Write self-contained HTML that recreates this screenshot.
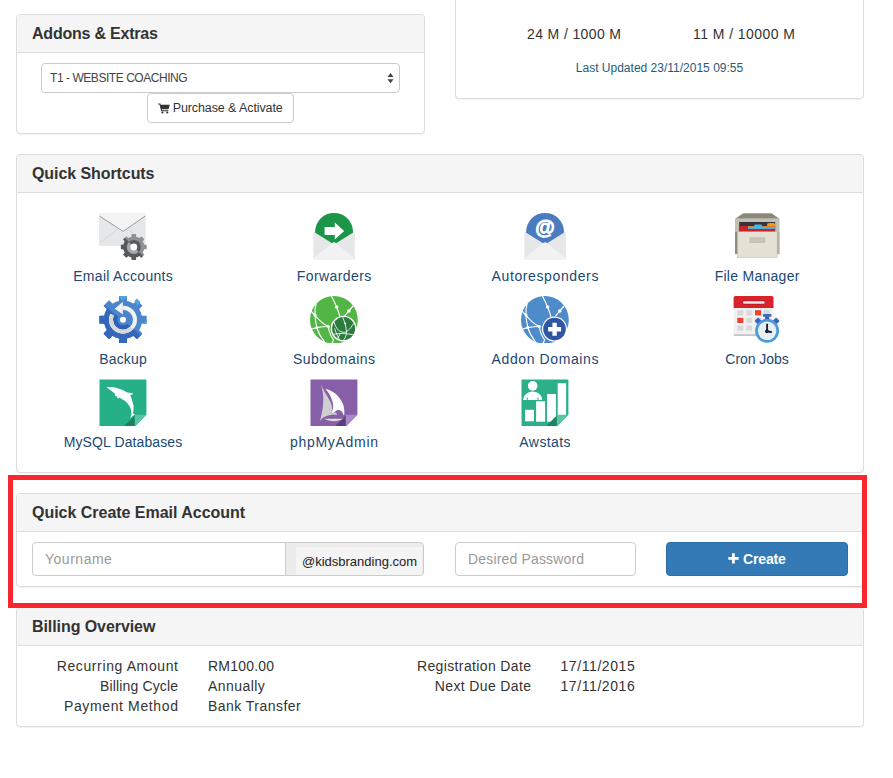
<!DOCTYPE html>
<html><head><meta charset="utf-8">
<style>
*{box-sizing:border-box;margin:0;padding:0}
html,body{width:893px;height:778px;background:#fff;overflow:hidden}
body{font-family:"Liberation Sans",sans-serif;color:#333;position:relative;font-size:14px}
.panel{position:absolute;border:1px solid #ddd;border-radius:4px;background:#fff;box-shadow:0 1px 1px rgba(0,0,0,.05)}
.ph{height:38px;background:#f5f5f5;border-bottom:1px solid #ddd;border-radius:3px 3px 0 0;padding-left:15px;line-height:37px;font-size:16px;font-weight:bold;color:#333;white-space:nowrap}
.abs{position:absolute}
.sel{position:absolute;left:24px;top:48px;width:359px;height:30px;border:1px solid #ccc;border-radius:4px;font-size:12px;line-height:29px;padding-left:8px;color:#444}
.btn{position:absolute;border:1px solid #ccc;border-radius:4px;background:#fff;font-size:12.5px;color:#333;text-align:center}
.sc{position:absolute;width:212px;text-align:center;color:#1f4e79;font-size:14.5px}
.sc svg{display:block;margin:0 auto}
.lbl{position:absolute;left:0;right:0;text-align:center}
.lb{width:200px;text-align:center;color:#1b4872;font-size:14px;line-height:20px;white-space:nowrap}
.red{position:absolute;left:8px;top:475px;width:859px;height:133px;border:5px solid #f8262f}
.inp{position:absolute;height:34px;border:1px solid #ccc;border-radius:4px;font-size:14px;color:#999;line-height:32px;padding-left:12px;background:#fff}
.bill{position:absolute;font-size:14px;color:#333;line-height:20px;white-space:nowrap}
</style></head><body>

<div class="panel" style="left:16px;top:14px;width:409px;height:120px">
  <div class="ph"><span style="letter-spacing:-0.221px;margin-right:0.221px">Addons &amp; Extras</span></div>
  <div class="sel"><span style="letter-spacing:-0.452px;margin-right:0.452px">T1 - WEBSITE COACHING</span>
    <svg class="abs" style="right:5px;top:9px" width="7" height="11" viewBox="0 0 7 11"><path d="M3.5 0L6.5 4H.5zM3.5 10.3L.5 6.3h6z" fill="#444"/></svg>
  </div>
  <div class="btn" style="left:130px;top:78px;width:147px;height:30px;line-height:28px">
    <svg style="vertical-align:-1.5px;margin-right:-1px" width="12" height="10.6" viewBox="0 0 11 10"><path d="M0 .5h2l.4 1.2H11L9.8 5.8H3.3l.3 1h6v1H2.8L1.3 1.5H0z" fill="#333"/><circle cx="4" cy="9" r="1" fill="#333"/><circle cx="8.6" cy="9" r="1" fill="#333"/></svg> <span style="letter-spacing:-0.099px;margin-right:0.099px">Purchase &amp; Activate</span></div>
</div>

<div class="panel" style="left:455px;top:-20px;width:409px;height:119px">
  <div class="abs" style="left:0;width:236px;top:45px;text-align:center;font-size:14px"><span style="letter-spacing:0.377px;margin-right:-0.377px">24 M / 1000 M</span></div>
  <div class="abs" style="left:170px;width:236px;top:45px;text-align:center;font-size:14px"><span style="letter-spacing:0.446px;margin-right:-0.446px">11 M / 10000 M</span></div>
  <div class="abs" style="left:0;right:0;top:80px;text-align:center;font-size:12px;color:#1f5a7a"><span style="letter-spacing:0.005px;margin-right:-0.005px">Last Updated 23/11/2015 09:55</span></div>
</div>

<div class="panel" style="left:16px;top:154px;width:848px;height:319px">
  <div class="ph"><span style="letter-spacing:-0.079px;margin-right:0.079px">Quick Shortcuts</span></div>
<svg class="abs" style="left:82px;top:57px" width="48" height="48" viewBox="0 0 48 48">
<rect x="0" y="1" width="46.6" height="33" rx="1.5" fill="#e6e7e8"/>
<path d="M0.3 2.5 Q0.5 1 1.8 1H44.8Q46.2 1 46.4 2.5V4L24.1 19.4L0.3 4z" fill="#f3f3f3"/>
<path d="M0.4 4L24.1 19.4L46.3 4" fill="none" stroke="#8c8c8c" stroke-width="0.85"/>
<path d="M0.7 30.5L19.4 17" fill="none" stroke="#d0d0d0" stroke-width="0.6"/>
<path d="M29 17.4L36 22.5" fill="none" stroke="#d0d0d0" stroke-width="0.6"/>
<g transform="translate(34.8 35)">
<defs><clipPath id="gl"><path d="M-20 -20L20 20H-20z"/></clipPath>
<g id="eg"><circle r="10.6"/>
<g id="t"><rect x="-2.3" y="-12.9" width="4.6" height="5" rx="0.7"/></g>
<use href="#t" transform="rotate(45)"/><use href="#t" transform="rotate(90)"/><use href="#t" transform="rotate(135)"/><use href="#t" transform="rotate(180)"/><use href="#t" transform="rotate(225)"/><use href="#t" transform="rotate(270)"/><use href="#t" transform="rotate(315)"/>
</g></defs>
<use href="#eg" fill="#8e9093"/>
<use href="#eg" fill="#58595b" clip-path="url(#gl)"/>
<circle r="7" fill="#58595b"/>
<circle r="7" fill="#a7a9ac" clip-path="url(#gl)"/>
<circle r="3.4" fill="#fff"/>
</g></svg>
<div class="abs lb" style="left:6px;top:111px"><span style="letter-spacing:0.292px;margin-right:-0.292px">Email Accounts</span></div>
<svg class="abs" style="left:293px;top:57px" width="48" height="48" viewBox="0 0 48 48">
<circle cx="24.05" cy="19.9" r="19" fill="#1b9548"/>
<path d="M3.3 18.4V47.7H24.05V32.6L3.3 19.4z" fill="#e6e7e8"/>
<path d="M44.8 18.4V47.7H24.05V32.6L44.8 19.4z" fill="#e6e7e8"/>
<path d="M3.3 47.7V46.4L22.2 31Q24.05 29.3 25.9 31L44.8 46.4V47.7z" fill="#f2f2f2"/>
<path d="M14.6 14.9H24.8V10.4L34.2 19L24.8 27.5V22.9H14.6z" fill="#fff"/></svg>
<div class="abs lb" style="left:217px;top:111px"><span style="letter-spacing:0.420px;margin-right:-0.420px">Forwarders</span></div>
<svg class="abs" style="left:504px;top:57px" width="48" height="48" viewBox="0 0 48 48">
<circle cx="24.05" cy="19.9" r="19" fill="#4a7bbf"/>
<path d="M3.3 18.4V47.7H24.05V32.6L3.3 19.4z" fill="#e6e7e8"/>
<path d="M44.8 18.4V47.7H24.05V32.6L44.8 19.4z" fill="#e6e7e8"/>
<path d="M3.3 47.7V46.4L22.2 31Q24.05 29.3 25.9 31L44.8 46.4V47.7z" fill="#f2f2f2"/>
<text x="24" y="21.6" text-anchor="middle" font-family="Liberation Sans" font-weight="bold" font-size="20" fill="#fff" stroke="#fff" stroke-width="0.9">@</text></svg>
<div class="abs lb" style="left:428px;top:111px"><span style="letter-spacing:0.611px;margin-right:-0.611px">Autoresponders</span></div>
<svg class="abs" style="left:716px;top:57px" width="48" height="48" viewBox="0 0 48 48">
<path d="M10.4 1.3H38.4L46.5 6.7H2z" fill="#8a877b"/>
<rect x="2" y="6.7" width="44.5" height="35.4" fill="#c3c0b2"/>
<rect x="2" y="19.7" width="3" height="22.4" fill="#8f8c80"/>
<rect x="43.8" y="19.7" width="2.7" height="22.4" fill="#b5b2a4"/>
<rect x="6.2" y="10" width="35.9" height="9.6" fill="#34343c"/>
<rect x="6.4" y="14" width="35.7" height="5.6" fill="#c9222a"/>
<path d="M15 14H21.1V14.7H15z M29.1 14H34.1V14.7H29.1z" fill="#f7941e"/>
<path d="M34.1 14.8V12.6Q34.1 11 35.7 11H40.5Q42.1 11 42.1 12.6V14.8z" fill="#f7941e"/>
<path d="M21.1 15.2V13.8Q21.1 12.4 22.5 12.4H27.7Q29.1 12.4 29.1 13.8V15.2z" fill="#3fbcec"/>
<rect x="15" y="14.9" width="27.1" height="2" fill="#3fbcec"/>
<rect x="4.35" y="19.7" width="39.75" height="26.1" fill="#e5e2d5" stroke="#b3b0a2" stroke-width="0.4"/>
<rect x="17" y="25.9" width="14.8" height="4.5" fill="#c8c5b6" stroke="#aeab9d" stroke-width="0.5"/></svg>
<div class="abs lb" style="left:640px;top:111px"><span style="letter-spacing:0.275px;margin-right:-0.275px">File Manager</span></div>
<svg class="abs" style="left:82px;top:140px" width="48" height="48" viewBox="0 0 48 48">
<defs><clipPath id="bk"><path d="M-5 2.4L53 49V60H-5z"/></clipPath>
<g id="gear"><circle cx="24" cy="24.7" r="19.2"/>
<g id="bt"><rect x="20" y="1" width="8" height="8" rx="0.8"/></g>
<use href="#bt" transform="rotate(45 24 24.7)"/><use href="#bt" transform="rotate(90 24 24.7)"/><use href="#bt" transform="rotate(135 24 24.7)"/><use href="#bt" transform="rotate(180 24 24.7)"/><use href="#bt" transform="rotate(225 24 24.7)"/><use href="#bt" transform="rotate(270 24 24.7)"/><use href="#bt" transform="rotate(315 24 24.7)"/></g>
<g id="arc"><circle cx="24" cy="24.7" r="12" fill="none" stroke-width="4" stroke-dasharray="61.5 13.9" transform="rotate(-90 24 24.7)"/></g></defs>
<use href="#gear" fill="#4b86cd"/>
<path d="M20 1H28V3L22.5 5.2z M35.5 6L38 3.6L41.5 7.2L38 10.6z M47.6 24.7V28.7H44.6z" fill="#52a4e0"/>
<use href="#gear" fill="#3568ba" clip-path="url(#bk)"/>
<circle cx="24" cy="24.7" r="10" fill="#4b86cd"/>
<circle cx="24" cy="24.7" r="10" fill="#2f62b3" clip-path="url(#bk)"/>
<circle cx="24" cy="24.7" r="5.6" fill="#4b86cd"/>
<use href="#arc" stroke="#f1f1f2"/>
<use href="#arc" stroke="#d7d8da" clip-path="url(#bk)"/>
<path d="M15.7 13.7L23.9 6.8V19.6z" fill="#f1f1f2"/>
<circle cx="24" cy="24.7" r="3" fill="#fff"/></svg>
<div class="abs lb" style="left:6px;top:194px"><span style="letter-spacing:0.149px;margin-right:-0.149px">Backup</span></div>
<svg class="abs" style="left:293px;top:140px" width="48" height="48" viewBox="0 0 48 48">
<circle cx="23.9" cy="24.9" r="23.9" fill="#52b647"/>
<g fill="none" stroke="#fff" stroke-width="1.15" stroke-linecap="round">
<path d="M21.5 1.3C23.5 5 25.2 8.5 26.6 12.1C28 15.5 29.2 18.5 29.8 21.5"/>
<path d="M43.1 11C41.5 12.6 40 14.5 38.8 16.1C37.2 17.8 36 19.2 34.8 20.7"/>
<path d="M6.1 8.9C5 12.5 4.6 16 5 20C5.2 24.5 5.8 28.5 6.8 32.4C8.2 37.5 11 42.5 14.3 46.6"/>
<path d="M1 16.1C2.2 17.5 3.6 18.8 5 20C8.5 25 13 29 18.3 31.5"/>
<path d="M1.8 34C3.5 33.4 5 33 6.8 32.6C10.5 32 14.5 31.6 18.3 31.5"/>
<path d="M18.3 31.5C19 37 21 41.5 23.7 44.8L21.9 48.4"/>
</g>
<g fill="#fff"><circle cx="26.6" cy="12.1" r="1.75"/><circle cx="38.8" cy="16.1" r="1.75"/><circle cx="5" cy="20" r="1.6"/><circle cx="6.8" cy="32.6" r="1.5"/><circle cx="18.3" cy="31.5" r="1.5"/></g>

<circle cx="33.6" cy="33.6" r="12.9" fill="#fff"/>
<circle cx="33.6" cy="33.6" r="11.5" fill="#2a7b3c"/>
<defs><clipPath id="sg"><circle cx="33.6" cy="33.6" r="11.5"/></clipPath></defs>
<g fill="none" stroke="#fff" stroke-width="0.85" clip-path="url(#sg)">
<path d="M32.7 22C35 28 37 34 36.3 39.4C35.8 42 34.5 44 32.6 46.5"/>
<path d="M24.1 27C26 34.5 30 37.5 34.5 37.3C38 36.5 41 33 44.5 26.9"/>
<path d="M21.6 39.8C28 38 36 38 46 40.4"/>
<path d="M24.6 33.4C26 38 28 42 30.4 46.5"/>
<path d="M30.5 38L27 45"/>
</g>
<circle cx="35.2" cy="28.3" r="0.9" fill="#fff"/></svg>
<div class="abs lb" style="left:217px;top:194px"><span style="letter-spacing:0.467px;margin-right:-0.467px">Subdomains</span></div>
<svg class="abs" style="left:504px;top:140px" width="48" height="48" viewBox="0 0 48 48">
<circle cx="23.9" cy="24.9" r="23.9" fill="#4e8bcb"/>
<g fill="none" stroke="#fff" stroke-width="1.15" stroke-linecap="round">
<path d="M21.5 1.3C23.5 5 25.2 8.5 26.6 12.1C28 15.5 29.2 18.5 29.8 21.5"/>
<path d="M43.1 11C41.5 12.6 40 14.5 38.8 16.1C37.2 17.8 36 19.2 34.8 20.7"/>
<path d="M6.1 8.9C5 12.5 4.6 16 5 20C5.2 24.5 5.8 28.5 6.8 32.4C8.2 37.5 11 42.5 14.3 46.6"/>
<path d="M1 16.1C2.2 17.5 3.6 18.8 5 20C8.5 25 13 29 18.3 31.5"/>
<path d="M1.8 34C3.5 33.4 5 33 6.8 32.6C10.5 32 14.5 31.6 18.3 31.5"/>
<path d="M18.3 31.5C19 37 21 41.5 23.7 44.8L21.9 48.4"/>
</g>
<g fill="#fff"><circle cx="26.6" cy="12.1" r="1.75"/><circle cx="38.8" cy="16.1" r="1.75"/><circle cx="5" cy="20" r="1.6"/><circle cx="6.8" cy="32.6" r="1.5"/><circle cx="18.3" cy="31.5" r="1.5"/></g>

<circle cx="33.5" cy="34.1" r="12.5" fill="#fff"/>
<circle cx="33.5" cy="34.1" r="11.3" fill="#2f55a4"/>
<path d="M31.4 27.7H35.8V32H40.1V36.4H35.8V40.7H31.4V36.4H27.1V32H31.4z" fill="#fff"/></svg>
<div class="abs lb" style="left:428px;top:194px"><span style="letter-spacing:0.598px;margin-right:-0.598px">Addon Domains</span></div>
<svg class="abs" style="left:716px;top:140px" width="48" height="48" viewBox="0 0 48 48">
<rect x="0.6" y="1" width="39.9" height="40" rx="1.8" fill="#f1f1f1"/>
<rect x="0.6" y="39.3" width="39.9" height="1.7" rx="0.8" fill="#c4c4c6"/>
<path d="M0.6 13V2.8Q0.6 1 2.4 1H38.7Q40.5 1 40.5 2.8V13z" fill="#d9222a"/>
<rect x="9.2" y="5.6" width="23.2" height="3.8" rx="1.9" fill="#b5161f"/>
<rect x="9.9" y="6.3" width="21.8" height="2.4" rx="1.2" fill="#e9e9ec"/>
<g fill="#d9d9db"><rect x="4.3" y="15.2" width="6" height="5.2"/><rect x="13.2" y="15.2" width="6" height="5.2"/><rect x="30.8" y="15.2" width="6" height="5.2"/><rect x="13.2" y="22.8" width="6" height="5.2"/><rect x="22" y="22.8" width="6" height="5.2"/><rect x="4.3" y="30.4" width="6" height="5.2"/><rect x="13.2" y="30.4" width="6" height="5.2"/></g>
<rect x="22" y="15.2" width="6" height="5.2" fill="#ee402e"/><rect x="4.3" y="22.8" width="6" height="5.2" fill="#ee402e"/>
<rect x="29.9" y="19" width="8.5" height="2.8" rx="0.6" fill="#3a6cc6"/>
<rect x="32.1" y="21.4" width="4" height="3" fill="#3359b4"/>
<rect x="22.6" y="23.6" width="5" height="5" transform="rotate(45 25.1 26.1)" fill="#3a63bd"/>
<rect x="40.6" y="23.6" width="5" height="5" transform="rotate(45 43.1 26.1)" fill="#3a63bd"/>
<circle cx="34.1" cy="35.8" r="12" fill="#4a9bdc"/>
<circle cx="34.1" cy="35.8" r="9.3" fill="#e9eef1"/>
<path d="M34.1 28.8V36.2L38.8 37.2" fill="none" stroke="#14233a" stroke-width="1.9"/>
<circle cx="33.9" cy="36.3" r="1.9" fill="#14233a"/></svg>
<div class="abs lb" style="left:640px;top:194px"><span style="letter-spacing:-0.057px;margin-right:0.057px">Cron Jobs</span></div>
<svg class="abs" style="left:82px;top:223px" width="48" height="48" viewBox="0 0 48 48">
<path d="M0.5 1.4H47.4V36.8L36 48.4H0.5z" fill="#25b087"/>

<path d="M35.8 37.4V48.4H24.8z" fill="#1b8163"/>
<path d="M35.8 36.8H47.4L35.8 48.4z" fill="#58c4a4"/>

<path d="M7.7 9.2C10 9 14 9 17.9 9.9C20 10.4 22 11.2 23.5 12C25 12.8 26 13.5 27.2 13.9C29 14.6 31.5 14.8 33.8 15.2L33.6 16.6C32.5 16.6 31.6 17 31.2 17.8C32.4 19.5 33 21.5 33.4 23.5C34.2 26 34.7 27.5 34.6 29.5C34.6 31.5 34.3 33.5 34 35.2L35.8 36.4C34.8 37 34 37.5 33.3 38.3C32.6 39 32 39.8 31.4 40.6C31.3 39.6 31.5 38.8 31.8 38.2C32.2 37.4 32.4 36.5 32.4 35.8C32.5 34.5 32.4 33.3 32.1 32.1C31.7 30.5 31 29 30.2 27.8C29.4 26.4 28.3 25.2 27.2 24.1C26 23 24.8 22.3 23.5 21.6L20.4 19.4L19.1 20.8L18.2 19.8L18.5 18.6L16.7 18.2C16.2 17.6 16 17 16 16.4C15.6 15.6 15 15 14.5 14.5L11.1 12z" fill="#fff"/></svg>
<div class="abs lb" style="left:6px;top:277px"><span style="letter-spacing:0.108px;margin-right:-0.108px">MySQL Databases</span></div>
<svg class="abs" style="left:293px;top:223px" width="48" height="48" viewBox="0 0 48 48">
<path d="M0.5 1.4H47.4V36.8L36 48.4H0.5z" fill="#875fa8"/>

<path d="M35.8 37.4V48.4H24.8z" fill="#5d3c80"/>
<path d="M35.8 36.8H47.4L35.8 48.4z" fill="#a888c7"/>

<path d="M10.8 6.2C12.8 12 13.4 18 13.3 22C13.2 27 12.6 32 11.4 37L9.9 43.2C11.5 41 13 39.6 15.4 38.6C17 37.6 18.8 37.2 20.4 37C22.5 36.6 25 36.8 27.2 37L25.9 34.6L21.3 35.8C22 33 22.2 30.5 21.9 28C21.2 25 20 23 18.8 21C17.5 18.5 16 16 14.4 13.6z" fill="#cfcfd1"/>
<path d="M15.4 11.1C17.5 11.5 19.8 12.2 21.6 13.3C24 14.5 26 16 27.8 17.9C29.5 19.8 31 21.8 32.1 24.1C33 26 33.6 27.8 34 29.6C34.4 32 34.4 34.5 34.3 37L33.3 37C33.2 35.8 32.8 34.8 32.1 34C31.3 33 30.2 32.3 29 32.1C27.8 32 26.8 32.2 25.9 32.7C25.3 33.1 24.9 33.7 24.7 34.3L21.3 35.8C22.2 33.8 22.8 31.6 23.1 29.6C23.3 28 23.2 26.3 22.8 24.7C22.2 22.3 21.4 20 20.4 17.9C19 15.4 17.3 13.1 15.4 11.1z" fill="#fff"/>
<path d="M14 40.5C20 44 28 44 33.4 40.5z" fill="#dcdcde"/>
<path d="M14.6 40.3H35.6" stroke="#707072" stroke-width="0.6"/></svg>
<div class="abs lb" style="left:217px;top:277px"><span style="letter-spacing:0.710px;margin-right:-0.710px">phpMyAdmin</span></div>
<svg class="abs" style="left:504px;top:223px" width="48" height="48" viewBox="0 0 48 48">
<path d="M0.5 1.4H47.4V36.8L36 48.4H0.5z" fill="#2bb08a"/>

<circle cx="11.7" cy="7.9" r="4.8" fill="#fff"/>
<path d="M2.2 21.9C2.6 17 6.5 13.4 11.7 13.4C17 13.4 20.9 17 21.3 21.9H17.5V19.2H16.5V21.9H6.7V19.2H5.7V21.9z" fill="#fff"/>
<rect x="4" y="31.8" width="9" height="11.5" fill="#fff"/>
<rect x="15.1" y="23.3" width="9" height="20.4" fill="#fff"/>
<rect x="26" y="16" width="8.9" height="27.7" fill="#fff"/>
<rect x="36.7" y="5.2" width="8.4" height="31.8" fill="#fff"/>
<path d="M35.8 37.4V48.4H24.8z" fill="#1d8265"/>
<path d="M35.8 36.8H47.4L35.8 48.4z" fill="#5cc5a6"/>
</svg>
<div class="abs lb" style="left:428px;top:277px"><span style="letter-spacing:0.419px;margin-right:-0.419px">Awstats</span></div>
</div>

<div class="panel" style="left:16px;top:493px;width:848px;height:94px">
  <div class="ph"><span style="letter-spacing:-0.023px;margin-right:0.023px">Quick Create Email Account</span></div>
  <div class="inp" style="left:15px;top:48px;width:254px;border-radius:4px 0 0 4px"><span style="letter-spacing:0.511px;margin-right:-0.511px">Yourname</span></div>
  <div class="inp" style="left:268px;top:48px;width:139px;border-radius:0 4px 4px 0;background:#ececec;color:#222;font-size:13px;padding-left:16px;line-height:38px;overflow:hidden"><div class="abs" style="left:10px;top:4px;right:1px;bottom:0;background:#f4f4f4"></div><span style="position:relative">@kidsbranding.com</span></div>
  <div class="inp" style="left:438px;top:48px;width:181px"><span style="letter-spacing:0.168px;margin-right:-0.168px">Desired Password</span></div>
  <div class="abs" style="left:649px;top:48px;width:182px;height:34px;border-radius:4px;background:#337ab7;border:1px solid #2e6da4;color:#fff;font-weight:bold;font-size:14.5px;line-height:32px;text-align:left;font-size:14px;letter-spacing:-0.15px"><svg class="abs" style="left:61px;top:10px" width="11" height="11" viewBox="0 0 11 11"><path d="M4 0.3H6.8V4H10.6V6.8H6.8V10.6H4V6.8H0.3V4H4z" fill="#fff"/></svg><span class="abs" style="left:76px;top:0">Create</span></div>
</div>

<div class="panel" style="left:16px;top:607px;width:848px;height:120px">
  <div class="ph"><span style="letter-spacing:-0.074px;margin-right:0.074px">Billing Overview</span></div>
  <div class="bill" style="right:685px;top:48px;text-align:right;width:200px"><span style="letter-spacing:0.615px;margin-right:-0.615px">Recurring Amount</span><br><span style="letter-spacing:0.142px;margin-right:-0.142px">Billing Cycle</span><br><span style="letter-spacing:0.633px;margin-right:-0.633px">Payment Method</span></div>
  <div class="bill" style="left:191px;top:48px"><span style="letter-spacing:0.213px;margin-right:-0.213px">RM100.00</span><br><span style="letter-spacing:0.450px;margin-right:-0.450px">Annually</span><br><span style="letter-spacing:0.465px;margin-right:-0.465px">Bank Transfer</span></div>
  <div class="bill" style="right:332px;top:48px;text-align:right;width:200px"><span style="letter-spacing:0.366px;margin-right:-0.366px">Registration Date</span><br><span style="letter-spacing:0.367px;margin-right:-0.367px">Next Due Date</span></div>
  <div class="bill" style="left:543.5px;top:48px"><span style="letter-spacing:0.577px;margin-right:-0.577px">17/11/2015</span><br><span style="letter-spacing:0.577px;margin-right:-0.577px">17/11/2016</span></div>
</div>

<div class="red"></div>
</body></html>
